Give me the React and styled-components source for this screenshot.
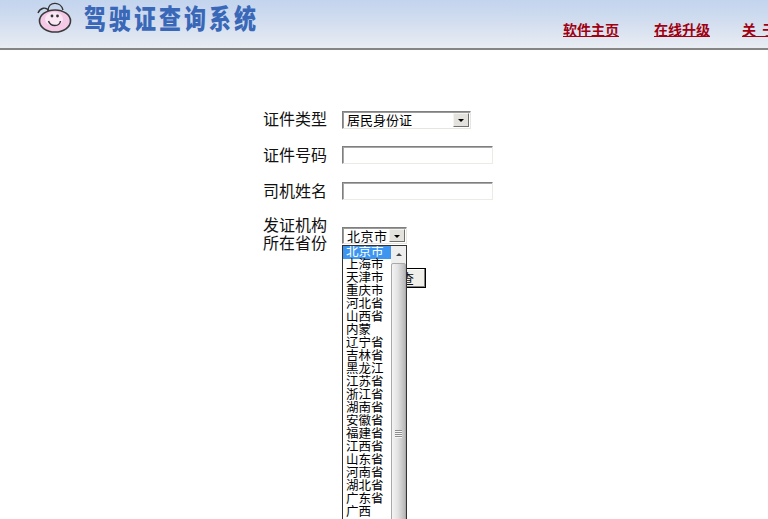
import React from "react";
import styled, { createGlobalStyle } from "styled-components";

const GlobalStyle = createGlobalStyle`
  html, body {
    margin: 0;
    padding: 0;
    background: #fff;
    overflow: hidden;
  }
  body {
    font-family: "Liberation Sans", "Noto Sans CJK SC", sans-serif;
  }
`;

const Page = styled.div`
  width: 768px;
  height: 519px;
  overflow: hidden;
`;

const Header = styled.header`
  height: 48px;
  display: flex;
  background: linear-gradient(180deg, #c3d4ee 0%, #d2ddef 45%, #e9edf3 100%);
  border-bottom: 2px solid #858585;
  overflow: hidden;
  white-space: nowrap;
`;

const Logo = styled.svg`
  width: 36px;
  height: 32px;
  margin: 2px 0 0 37px;
  flex: none;
`;

const Title = styled.h1`
  margin: 4px 0 0 11px;
  width: 268px;
  flex: none;
  font-size: 22px;
  line-height: 24px;
  height: 24px;
  font-weight: 900;
  letter-spacing: 3px;
  color: #3a68b8;
  font-family: "Noto Sans CJK SC", sans-serif;
  transform: scaleY(1.25);
  transform-origin: 0 50%;
`;

const Nav = styled.nav`
  display: flex;
  gap: 35px;
  margin: 21px 0 0 211px;
  flex: none;
`;

const NavLink = styled.a`
  font-size: 14px;
  line-height: 17px;
  font-weight: 700;
  color: #a00010;
  text-decoration: underline;
  font-family: "Noto Sans CJK SC", sans-serif;
  white-space: pre;

  &:last-child {
    margin-left: -3px;
  }
`;

const Form = styled.form`
  display: grid;
  grid-template-columns: 64px auto;
  column-gap: 15px;
  align-content: start;
  justify-content: start;
  margin: 60px 0 0 263px;
  font-family: "Noto Sans CJK SC", sans-serif;
`;

const Label = styled.label`
  font-size: 16px;
  line-height: 18px;
  color: #111;
  margin-top: -1px;
  height: ${(p) => p.$height || 18}px;
  white-space: pre;
`;

const Field = styled.div`
  height: ${(p) => p.$height || 18}px;
  margin-bottom: ${(p) => p.$gap ?? 18}px;
  padding-top: ${(p) => p.$inset || 0}px;
  box-sizing: border-box;
  display: flex;
  align-items: flex-start;
  position: relative;
`;

const SelectBox = styled.div`
  box-sizing: border-box;
  width: ${(p) => p.$width}px;
  height: ${(p) => p.$h}px;
  background: #fff;
  display: flex;
  align-items: center;
  justify-content: space-between;
  border: 1px solid #e6e6e0;
  border-top-color: #7f7f7f;
  border-left-color: #7f7f7f;
  box-shadow: inset 1px 1px 0 #9a9a9a;
  padding: 1px 1px 1px 4px;
  font-size: ${(p) => p.$size}px;
  color: #000;
  line-height: 14px;
  letter-spacing: ${(p) => p.$spacing || 0}px;
`;

const SelectButton = styled.span`
  box-sizing: border-box;
  width: 16px;
  height: 100%;
  flex: none;
  background: #e4e2dc;
  border: 1px solid;
  border-color: #f4f4f0 #707070 #707070 #f4f4f0;
  display: flex;
  align-items: center;
  justify-content: center;

  &::after {
    content: "";
    border-left: 3px solid transparent;
    border-right: 3px solid transparent;
    border-top: 3px solid #000;
    margin-top: 1px;
  }
`;

const TextInput = styled.input`
  box-sizing: border-box;
  width: 151px;
  height: 18px;
  padding: 0 2px;
  background: #fff;
  border: 1px solid #ecece6;
  border-top-color: #7f7f7f;
  border-left-color: #7f7f7f;
  box-shadow: inset 1px 1px 0 #a8a8a8;
  outline: none;
`;

const Empty = styled.div``;

const SubmitButton = styled.button`
  box-sizing: border-box;
  width: 84px;
  height: 20px;
  padding: 0 11px 0 0;
  background: #f0efea;
  border: 1px solid #000;
  box-shadow: inset -1px -1px 0 #808080, inset 1px 1px 0 #fff;
  font-family: inherit;
  font-size: 13px;
  line-height: 16px;
  text-align: right;
  color: #111;
`;

const Dropdown = styled.div`
  position: absolute;
  top: 29px;
  left: 0;
  z-index: 2;
  box-sizing: border-box;
  width: 65px;
  height: 370px;
  background: #fff;
  border: 1px solid #333;
  border-bottom: none;
  display: flex;
`;

const OptionList = styled.ul`
  list-style: none;
  margin: 0;
  padding: 0;
  flex: 1;
  min-width: 0;
  overflow: hidden;
`;

const Option = styled.li`
  height: 13px;
  line-height: 10px;
  padding-left: 3px;
  font-size: 12.5px;
  white-space: nowrap;
  color: ${(p) => (p.$selected ? "#fff" : "#000")};
  background: ${(p) => (p.$selected ? "#3d95f0" : "transparent")};
`;

const Scrollbar = styled.div`
  width: 15px;
  flex: none;
  display: flex;
  flex-direction: column;
  background: #ecebe6;
`;

const ScrollUp = styled.div`
  height: 17px;
  flex: none;
  background: #eeeeee;
  display: flex;
  align-items: center;
  justify-content: center;

  &::after {
    content: "";
    border-left: 3px solid transparent;
    border-right: 3px solid transparent;
    border-bottom: 3px solid #444;
  }
`;

const ScrollThumb = styled.div`
  flex: none;
  height: 342px;
  box-sizing: border-box;
  border: 1px solid #a9a9a9;
  border-radius: 2px 2px 0 0;
  background: linear-gradient(90deg, #f4f4f4 0%, #e2e2e2 45%, #b9b9b9 100%);
  display: flex;
  align-items: center;
  justify-content: center;
`;

const Grip = styled.span`
  display: block;
  width: 7px;
  height: 8px;
  background: repeating-linear-gradient(180deg, #8d8d8d 0 1px, #f5f5f5 1px 2px);
`;

const provinces = [
  "北京市", "上海市", "天津市", "重庆市", "河北省", "山西省", "内蒙",
  "辽宁省", "吉林省", "黑龙江", "江苏省", "浙江省", "湖南省", "安徽省",
  "福建省", "江西省", "山东省", "河南省", "湖北省", "广东省", "广西",
];

export default function App() {
  return (
    <Page>
      <GlobalStyle />
      <Header>
        <Logo viewBox="0 0 36 32">
          <path d="M1 11c2-5 8-7 11-2" fill="none" stroke="#333" strokeWidth="1.4" />
          <path d="M11 9c0-10 13-10 15-1" fill="none" stroke="#333" strokeWidth="1.4" />
          <ellipse cx="18" cy="19" rx="15.5" ry="11" fill="#f3c9e6" stroke="#3a3a3a" strokeWidth="1.6" />
          <ellipse cx="17" cy="17" rx="9" ry="7" fill="#fbe6f6" />
          <circle cx="15" cy="14" r="1.4" fill="#333" />
          <circle cx="20.5" cy="14" r="1.4" fill="#333" />
          <path d="M11.5 19c2 6 11 6 12 0" fill="none" stroke="#333" strokeWidth="1.5" />
        </Logo>
        <Title>驾驶证查询系统</Title>
        <Nav>
          <NavLink href="#">软件主页</NavLink>
          <NavLink href="#">在线升级</NavLink>
          <NavLink href="#">关  于</NavLink>
        </Nav>
      </Header>
      <Form>
        <Label>证件类型</Label>
        <Field $height={19} $gap={17} $inset={1}>
          <SelectBox $width={129} $h={18} $size={13}>
            居民身份证
            <SelectButton />
          </SelectBox>
        </Field>

        <Label>证件号码</Label>
        <Field>
          <TextInput />
        </Field>

        <Label>司机姓名</Label>
        <Field $gap={16}>
          <TextInput />
        </Field>

        <Label $height={36}>{"发证机构\n所在省份"}</Label>
        <Field $height={36} $gap={16} $inset={11}>
          <SelectBox $width={65} $h={17} $size={13} $spacing={0.5}>
            北京市
            <SelectButton />
          </SelectBox>
          <Dropdown>
            <OptionList>
              {provinces.map((name, i) => (
                <Option key={name} $selected={i === 0}>{name}</Option>
              ))}
            </OptionList>
            <Scrollbar>
              <ScrollUp />
              <ScrollThumb>
                <Grip />
              </ScrollThumb>
            </Scrollbar>
          </Dropdown>
        </Field>

        <Empty />
        <Field $height={20} $gap={0}>
          <SubmitButton type="button">查</SubmitButton>
        </Field>
      </Form>
    </Page>
  );
}
